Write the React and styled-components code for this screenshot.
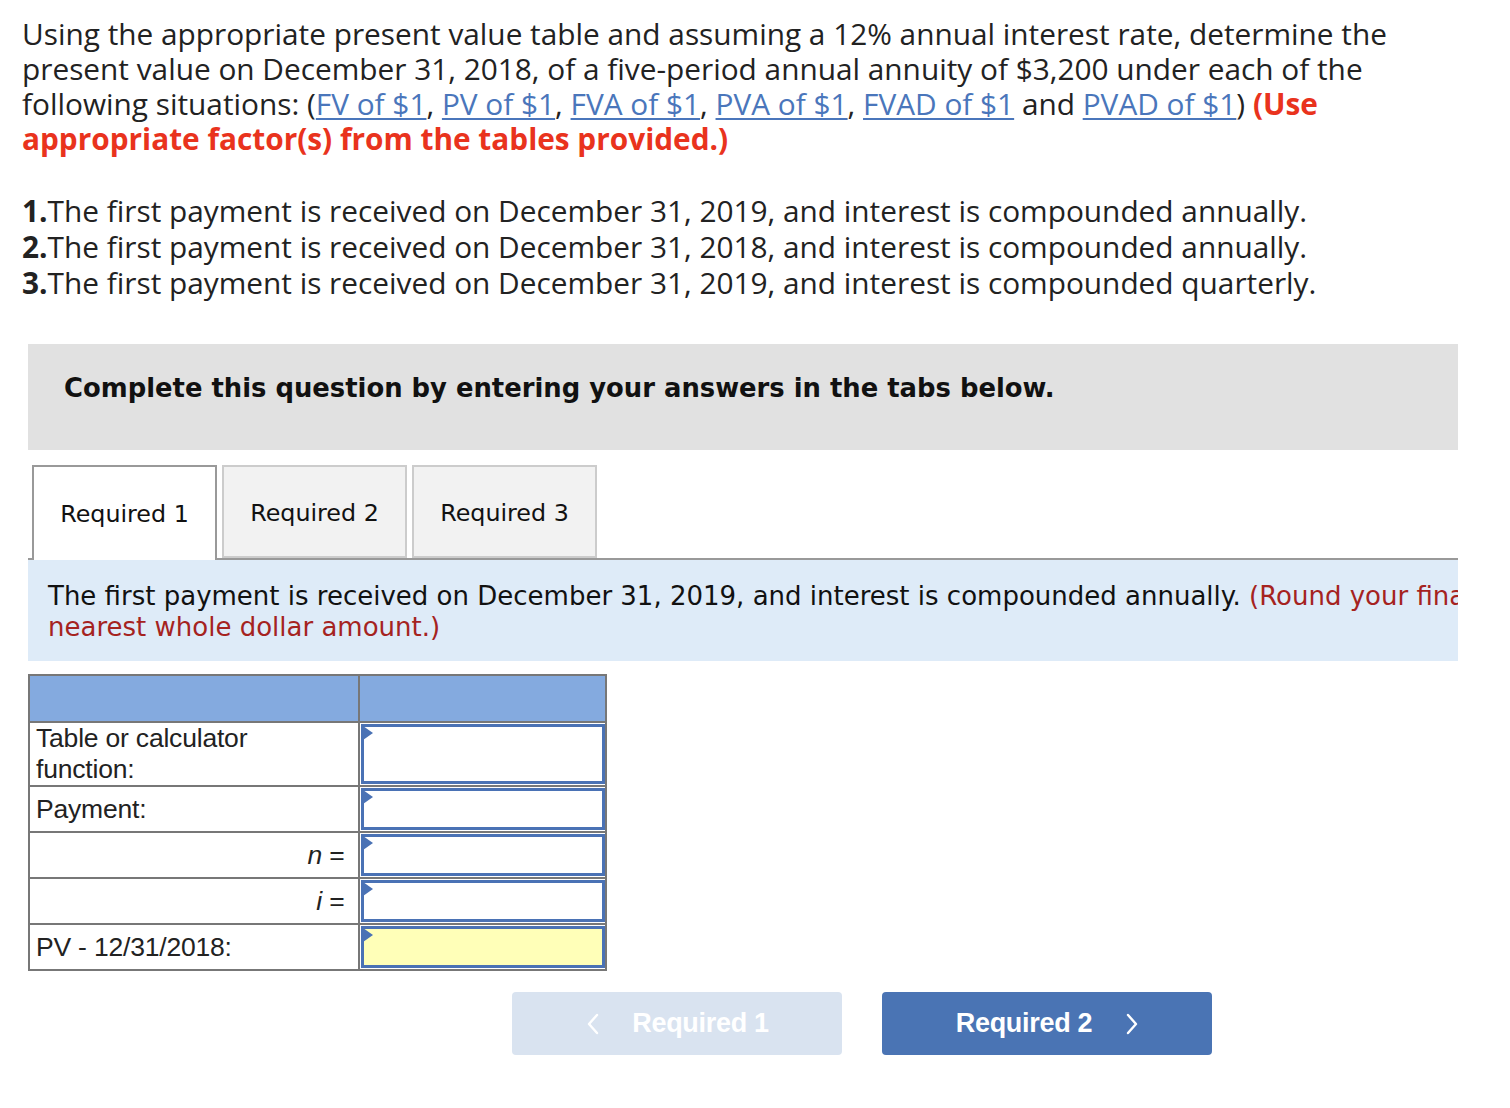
import React from "react";
import styled, { createGlobalStyle } from "styled-components";

const Global = createGlobalStyle`
  html, body { margin: 0; padding: 0; background: #fff; }
  body { font-family: "Open Sans", sans-serif; color: #222; }
`;

const Page = styled.div`
  width: 1510px;
  padding: 16px 0 40px 22px;
  box-sizing: border-box;
`;

const Question = styled.p`
  margin: 0;
  width: 1480px;
  font-family: "Open Sans", sans-serif;
  font-size: 29.8px;
  line-height: 35px;
  color: #222;
`;

const Link = styled.a`
  color: #4a76bb;
  text-decoration: underline;
  text-underline-offset: 3px;
`;

const Warn = styled.strong`
  color: #e9331d;
  font-weight: 700;
`;

const Steps = styled.ol`
  list-style: none;
  margin: 37px 0 0 0;
  padding: 0;
  font-family: "Open Sans", sans-serif;
  font-size: 29.8px;
  line-height: 36px;
  color: #222;
`;

const Num = styled.b`
  font-weight: 700;
`;

const Panel = styled.section`
  margin: 43px 0 0 6px;
  width: 1430px;
`;

const Instruct = styled.div`
  height: 106px;
  box-sizing: border-box;
  background: #e1e1e1;
  padding: 27px 0 0 36px;
  font-family: "DejaVu Sans", Verdana, sans-serif;
  font-weight: 700;
  font-size: 25.85px;
  line-height: 34px;
  color: #111;
`;

const TabBar = styled.div`
  display: flex;
  gap: 5px;
  margin-top: 15px;
  padding-left: 4px;
  border-bottom: 2px solid #999;
  height: 95px;
  box-sizing: border-box;
`;

const Tab = styled.div`
  width: 185px;
  box-sizing: border-box;
  display: flex;
  align-items: center;
  justify-content: center;
  font-family: "DejaVu Sans", Verdana, sans-serif;
  font-size: 23.8px;
  color: #111;
  background: ${(p) => (p.$active ? "#fff" : "#f2f2f2")};
  border: 2px solid ${(p) => (p.$active ? "#999" : "#ccc")};
  border-bottom: ${(p) => (p.$active ? "none" : "2px solid #ccc")};
  height: ${(p) => (p.$active ? "95px" : "93px")};
  padding-top: ${(p) => (p.$active ? "0" : "3px")};
  position: relative;
  z-index: 1;
`;

const Info = styled.div`
  background: #deebf8;
  overflow: hidden;
  height: 101px;
  box-sizing: border-box;
  padding: 21px 0 0 20px;
  font-family: "DejaVu Sans", Verdana, sans-serif;
  font-size: 26px;
  line-height: 31px;
  color: #111;
  white-space: nowrap;
`;

const Note = styled.span`
  color: #a5231f;
`;

const Grid = styled.table`
  margin-top: 13px;
  border-collapse: collapse;
  width: 579px;
  font-family: "Liberation Sans", Arial, sans-serif;
  font-size: 26.5px;
  line-height: 31px;
  color: #222;
  border: 2px solid #777;
`;

const HeadCell = styled.th`
  background: #84aadf;
  height: 45px;
  border: 2px solid #777;
  padding: 0;
  width: ${(p) => p.$w}px;
`;

const Label = styled.td`
  border: 2px solid #777;
  padding: 0 6px;
  box-sizing: border-box;
  text-align: ${(p) => (p.$right ? "right" : "left")};
  padding-right: ${(p) => (p.$right ? "14px" : "6px")};
  vertical-align: middle;
  letter-spacing: -0.2px;
`;

const Italic = styled.i`
  font-style: italic;
`;

const InputCell = styled.td`
  border: 2px solid #777;
  padding: 0;
  box-sizing: border-box;
`;

const Field = styled.div`
  position: relative;
  margin: 1px 0 1px 1px;
  height: ${(p) => p.$h}px;
  box-sizing: border-box;
  border: 3px solid #4a72b5;
  background: ${(p) => (p.$hl ? "#ffffb8" : "#fff")};
`;

const Marker = styled.span`
  position: absolute;
  left: -1px;
  top: -1px;
  width: 0;
  height: 0;
  border-top: 7px solid transparent;
  border-bottom: 7px solid transparent;
  border-left: 10px solid #4a72b5;
`;

const Nav = styled.div`
  display: flex;
  gap: 40px;
  margin-top: 21px;
  padding-left: 490px;
`;

const NavButton = styled.button`
  width: 330px;
  height: 63px;
  border: none;
  border-radius: 4px;
  display: flex;
  align-items: center;
  justify-content: center;
  gap: ${(p) => (p.$prev ? "33px" : "34px")};
  background: ${(p) => (p.$disabled ? "#d9e3f0" : "#4a74b4")};
  color: #fff;
  font-family: "Liberation Sans", Arial, sans-serif;
  font-weight: 700;
  font-size: 27px;
  letter-spacing: -0.3px;
  padding: 0 0 0 ${(p) => (p.$prev ? "2px" : "0px")};
  cursor: pointer;
`;

const Chevron = ({ dir }) => (
  <svg width="12" height="22" viewBox="0 0 12 22" fill="none">
    <path
      d={dir === "left" ? "M10 2 L2 11 L10 20" : "M2 2 L10 11 L2 20"}
      stroke="#fff"
      strokeWidth="2.4"
      strokeLinecap="round"
      strokeLinejoin="round"
    />
  </svg>
);

const rows = [
  { label: "Table or calculator function:", fh: 60 },
  { label: "Payment:", fh: 42 },
  { label: <><Italic>n</Italic> =</>, fh: 42, right: true },
  { label: <><Italic>i</Italic> =</>, fh: 42, right: true },
  { label: "PV - 12/31/2018:", fh: 42, hl: true },
];

export default function App() {
  return (
    <Page>
      <Global />
      <Question>
        Using the appropriate present value table and assuming a 12% annual interest rate, determine the
        <br />
        present value on December 31, 2018, of a five-period annual annuity of $3,200 under each of the
        <br />
        following situations: (<Link>FV of $1</Link>, <Link>PV of $1</Link>, <Link>FVA of $1</Link>,{" "}
        <Link>PVA of $1</Link>, <Link>FVAD of $1</Link> and <Link>PVAD of $1</Link>) <Warn>(Use</Warn>
        <br />
        <Warn>appropriate factor(s) from the tables provided.)</Warn>
      </Question>
      <Steps>
        <li><Num>1.</Num>The first payment is received on December 31, 2019, and interest is compounded annually.</li>
        <li><Num>2.</Num>The first payment is received on December 31, 2018, and interest is compounded annually.</li>
        <li><Num>3.</Num>The first payment is received on December 31, 2019, and interest is compounded quarterly.</li>
      </Steps>
      <Panel>
        <Instruct>Complete this question by entering your answers in the tabs below.</Instruct>
        <TabBar>
          <Tab $active>Required 1</Tab>
          <Tab>Required 2</Tab>
          <Tab>Required 3</Tab>
        </TabBar>
        <Info>
          The first payment is received on December 31, 2019, and interest is compounded annually.{" "}
          <Note>(Round your final answer to the</Note>
          <br />
          <Note>nearest whole dollar amount.)</Note>
        </Info>
        <Grid>
          <thead>
            <tr>
              <HeadCell $w={331} />
              <HeadCell $w={248} />
            </tr>
          </thead>
          <tbody>
            {rows.map((r, i) => (
              <tr key={i}>
                <Label $right={r.right}>{r.label}</Label>
                <InputCell>
                  <Field $h={r.fh} $hl={r.hl}>
                    <Marker />
                  </Field>
                </InputCell>
              </tr>
            ))}
          </tbody>
        </Grid>
      </Panel>
      <Nav>
        <NavButton $disabled $prev>
          <Chevron dir="left" />
          <span>Required 1</span>
        </NavButton>
        <NavButton>
          <span>Required 2</span>
          <Chevron dir="right" />
        </NavButton>
      </Nav>
    </Page>
  );
}
